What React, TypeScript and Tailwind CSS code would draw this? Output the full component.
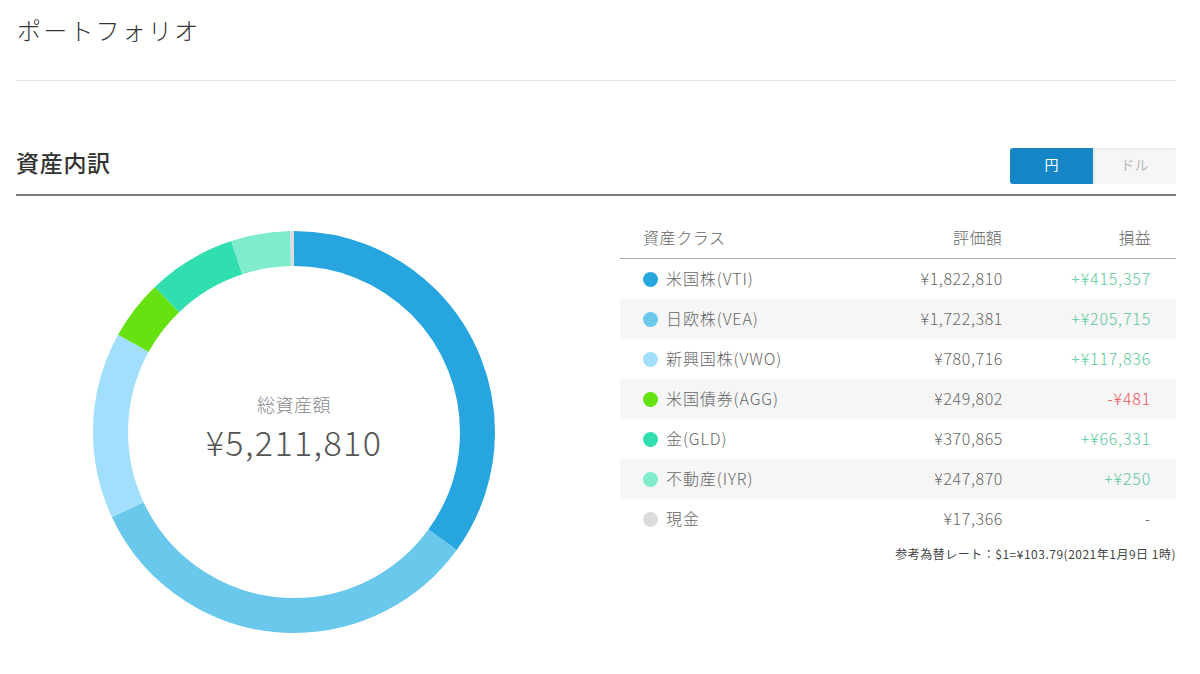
const font = { fontFamily: '"Noto Sans CJK JP", "Noto Sans", sans-serif' };

const rows = [
  { name: "米国株(VTI)", color: "#26a5de", value: 1822810, amount: "¥1,822,810", pnl: "+¥415,357", tone: "text-[#5bc99b]" },
  { name: "日欧株(VEA)", color: "#69c8ec", value: 1722381, amount: "¥1,722,381", pnl: "+¥205,715", tone: "text-[#5bc99b]" },
  { name: "新興国株(VWO)", color: "#a1dffc", value: 780716, amount: "¥780,716", pnl: "+¥117,836", tone: "text-[#5bc99b]" },
  { name: "米国債券(AGG)", color: "#66e210", value: 249802, amount: "¥249,802", pnl: "-¥481", tone: "text-[#f0555a]" },
  { name: "金(GLD)", color: "#30deb0", value: 370865, amount: "¥370,865", pnl: "+¥66,331", tone: "text-[#5bc99b]" },
  { name: "不動産(IYR)", color: "#80ecce", value: 247870, amount: "¥247,870", pnl: "+¥250", tone: "text-[#5bc99b]" },
  { name: "現金", color: "#dcdcdc", value: 17366, amount: "¥17,366", pnl: "-", tone: "text-[#666666]" },
];

function Donut() {
  const total = rows.reduce((s, r) => s + r.value, 0);
  const r = 183.5;
  const c = 2 * Math.PI * r;
  let acc = 0;
  return (
    <svg width="404" height="404" viewBox="0 0 404 404" className="block">
      {rows.map((row) => {
        const len = (row.value / total) * c;
        const el = (
          <circle
            key={row.name}
            cx="202"
            cy="202"
            r={r}
            fill="none"
            stroke={row.color}
            strokeWidth="35"
            strokeDasharray={`${len} ${c - len}`}
            strokeDashoffset={-acc}
            transform="rotate(-90 202 202)"
          />
        );
        acc += len;
        return el;
      })}
    </svg>
  );
}

export default function App() {
  return (
    <div style={font} className="w-[1200px] h-[674px] overflow-hidden bg-white pl-4 pr-6 text-[#666666] font-light">
      <header className="h-[81px] border-b border-[#e4e4e4] pt-[12px]">
        <h1 className="pl-[1px] text-[24px] leading-[36px] tracking-[2.2px] text-[#333333]">ポートフォリオ</h1>
      </header>

      <section className="mt-[67px]">
        <div className="flex h-[48px] items-start justify-between border-b-2 border-[#7a7a7a]">
          <h2 className="text-[23px] leading-[32px] tracking-[0.7px] font-medium text-[#333333] -mt-[2px]">資産内訳</h2>
          <div className="flex h-[36px] w-[166px] overflow-hidden rounded-[3px] text-[14px] font-normal">
            <div className="flex w-[83px] items-center justify-center bg-[#1685c6] pb-[3px] text-white">円</div>
            <div className="flex w-[83px] items-center justify-center border-t-2 border-l-2 border-[#ececec] bg-[#f6f6f6] pb-[5px] pr-[2px] text-[#bbbbbb]">ドル</div>
          </div>
        </div>

        <div className="flex">
          <div className="ml-[76px] mt-[34px] relative h-[404px] w-[404px]">
            <Donut />
            <div className="absolute inset-0 flex flex-col items-center justify-center pb-[8px]">
              <div className="text-[18px] leading-[26px] tracking-[0.5px] text-[#888888]">総資産額</div>
              <div className="mt-[2px] text-[34px] leading-[46px] tracking-[1.4px] text-[#555555]">¥5,211,810</div>
            </div>
          </div>

          <div className="ml-[124px] mt-[22px] w-[556px]">
            <div className="flex h-[41px] items-center border-b border-[#aaaaaa] pl-[23px] pr-[25px] pb-[2px] text-[16px]">
              <div className="w-[231px] tracking-[0.6px]">資産クラス</div>
              <div className="w-[128px] text-right tracking-[0.3px]">評価額</div>
              <div className="flex-1 text-right tracking-[0.3px]">損益</div>
            </div>
            {rows.map((row, i) => (
              <div key={row.name} className={`flex h-[40px] items-center pl-[23px] pr-[25px] text-[16px] ${i % 2 === 1 ? "bg-[#f6f6f6]" : "bg-white"}`}>
                <div className="flex w-[231px] items-center gap-2">
                  <span className="h-[15px] w-[15px] rounded-full" style={{ backgroundColor: row.color }} />
                  <span className="pb-[3px] tracking-[0.9px]">{row.name}</span>
                </div>
                <div className="w-[129px] pb-[3px] text-right tracking-[0.6px]">{row.amount}</div>
                <div className={`flex-1 pb-[3px] text-right tracking-[0.8px] ${row.tone}`}>{row.pnl}</div>
              </div>
            ))}
            <div className="mt-[6px] text-right text-[12px] leading-[18px] tracking-[0.5px] font-normal text-[#444444]">参考為替レート：$1=¥103.79(2021年1月9日 1時)</div>
          </div>
        </div>
      </section>
    </div>
  );
}
